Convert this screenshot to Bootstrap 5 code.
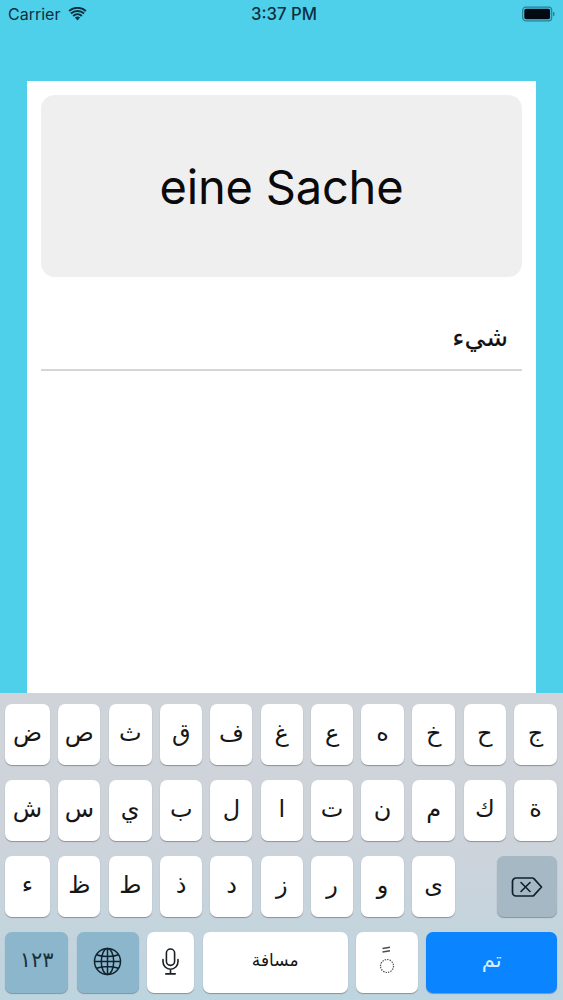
<!DOCTYPE html>
<html lang="de">
<head>
<meta charset="utf-8">
<title>Flashcard</title>
<link href="https://cdn.jsdelivr.net/npm/bootstrap@5.3.0/dist/css/bootstrap.min.css" rel="stylesheet">
<style>
html,body{margin:0;height:1000px;overflow:hidden}
body{background:#4fd0ea;font-family:Inter,"Liberation Sans",sans-serif;color:#000}
.phone-root{height:1000px;width:563px}
.status-strip{height:81px;padding:0 8px 0 8px;color:#0b2f3f;font-size:16px;position:relative}
.status-row{height:28px}
.status-clock{position:absolute;left:0;right:0;top:0;height:28px;line-height:28px;text-align:center;font-weight:500;font-size:16.7px;padding-left:5px}
.wifi-gap{gap:8px}
.sheet{flex:1 1 auto;min-height:0;margin:0 27px;background:#fff;padding:14px 14px 0}
.word-panel{height:182px;width:481px;background:#f0eff0;border-radius:14px;font-size:47px;line-height:1;color:#0a0a0a;letter-spacing:-.2px}
.answer-line{margin:0;width:481px;height:93.5px;border-bottom:2px solid #d6d6d8;padding:0 14px 12px 0;font-family:"DejaVu Sans",sans-serif;font-size:26px;color:#111;-webkit-text-stroke:.15px #111}
.kbd{height:307px;background:linear-gradient(180deg,#d0d3da 0%,#ced3da 45%,#bdd5e0 100%);padding:11px 6px 0 5px;flex:0 0 auto}
.kbd-row{height:61px;margin-bottom:15px;gap:8.3px}
.kbd-row.last-row{gap:8.4px}
.keycap{width:42px;height:61px;flex:0 0 auto;background:#fff;border-radius:7px;box-shadow:0 1px 1px #8d9198;font-family:"DejaVu Sans",sans-serif;font-size:24px;color:#161616;padding-bottom:3px}
.keycap.first-w{width:45px}
.keycap.mid-w{width:43.3px}
.keycap.alt-w{width:42.4px}
.keycap.dark-key{background:#a6b8c3;padding-bottom:0}
.keycap.blue-dark{background:#8cb6cb}
.keycap.go-key{background:#0a84ff;color:#d6ecff}
.keycap.w-del{width:60px;margin-left:auto}
.keycap.w-num{width:63.2px}
.keycap.w-globe{width:62.2px}
.keycap.w-mic{width:47px}
.keycap.w-space{width:145.3px;font-size:17px}
.keycap.w-mark{width:61.3px}
.keycap.w-done{width:131.4px;font-size:21px}
.num-label{font-size:21px;color:#17323f}
</style>
</head>
<body>
<div class="phone-root d-flex flex-column">
  <div class="status-strip">
    <div class="status-row d-flex align-items-center justify-content-between">
      <div class="d-flex align-items-center wifi-gap">
        <span>Carrier</span>
        <svg width="19" height="14" viewBox="0 0 18 14" aria-hidden="true"><path d="M9 13.5 6.4 10.6a3.8 3.8 0 0 1 5.2 0z" fill="#0b2f3f"/><path d="M4.6 8.6a6.6 6.6 0 0 1 8.8 0M2.4 6.1a9.8 9.8 0 0 1 13.2 0M.6 3.6a12.7 12.7 0 0 1 16.8 0" transform="translate(0 .4)" fill="none" stroke="#0b2f3f" stroke-width="1.9"/></svg>
      </div>
      <svg width="33" height="16" viewBox="0 0 33 16" aria-hidden="true"><rect x=".7" y="1.2" width="29" height="13.6" rx="3" fill="none" stroke="#2b7d97" stroke-width="1.2"/><rect x="2.3" y="2.8" width="25.8" height="10.4" rx="1.8" fill="#030a12"/><rect x="31" y="6" width="1.5" height="4" rx=".7" fill="#2b7d97"/></svg>
    </div>
    <div class="status-clock">3:37 PM</div>
  </div>
  <div class="sheet">
    <div class="word-panel d-flex align-items-center justify-content-center">eine Sache</div>
    <p class="answer-line d-flex align-items-end justify-content-end" dir="ltr"><span dir="rtl">شيء</span></p>
  </div>
  <div class="kbd" dir="ltr">
    <div class="kbd-row d-flex">
      <div class="keycap first-w d-flex align-items-center justify-content-center">ض</div>
      <div class="keycap d-flex align-items-center justify-content-center">ص</div>
      <div class="keycap mid-w d-flex align-items-center justify-content-center">ث</div>
      <div class="keycap d-flex align-items-center justify-content-center">ق</div>
      <div class="keycap d-flex align-items-center justify-content-center">ف</div>
      <div class="keycap d-flex align-items-center justify-content-center">غ</div>
      <div class="keycap d-flex align-items-center justify-content-center">ع</div>
      <div class="keycap alt-w d-flex align-items-center justify-content-center">ه</div>
      <div class="keycap mid-w d-flex align-items-center justify-content-center">خ</div>
      <div class="keycap alt-w d-flex align-items-center justify-content-center">ح</div>
      <div class="keycap alt-w d-flex align-items-center justify-content-center">ج</div>
    </div>
    <div class="kbd-row d-flex">
      <div class="keycap first-w d-flex align-items-center justify-content-center">ش</div>
      <div class="keycap d-flex align-items-center justify-content-center">س</div>
      <div class="keycap mid-w d-flex align-items-center justify-content-center">ي</div>
      <div class="keycap d-flex align-items-center justify-content-center">ب</div>
      <div class="keycap d-flex align-items-center justify-content-center">ل</div>
      <div class="keycap d-flex align-items-center justify-content-center">ا</div>
      <div class="keycap d-flex align-items-center justify-content-center">ت</div>
      <div class="keycap alt-w d-flex align-items-center justify-content-center">ن</div>
      <div class="keycap mid-w d-flex align-items-center justify-content-center">م</div>
      <div class="keycap alt-w d-flex align-items-center justify-content-center">ك</div>
      <div class="keycap alt-w d-flex align-items-center justify-content-center">ة</div>
    </div>
    <div class="kbd-row d-flex">
      <div class="keycap first-w d-flex align-items-center justify-content-center">ء</div>
      <div class="keycap d-flex align-items-center justify-content-center">ظ</div>
      <div class="keycap mid-w d-flex align-items-center justify-content-center">ط</div>
      <div class="keycap d-flex align-items-center justify-content-center">ذ</div>
      <div class="keycap d-flex align-items-center justify-content-center">د</div>
      <div class="keycap d-flex align-items-center justify-content-center">ز</div>
      <div class="keycap d-flex align-items-center justify-content-center">ر</div>
      <div class="keycap alt-w d-flex align-items-center justify-content-center">و</div>
      <div class="keycap mid-w d-flex align-items-center justify-content-center">ى</div>
      <div class="keycap dark-key w-del d-flex align-items-center justify-content-center">
        <svg width="32" height="24" viewBox="0 0 32 24" aria-hidden="true"><path d="M5 3h16.5a2 2 0 0 1 1.4.6L30.5 12l-7.6 8.4a2 2 0 0 1-1.4.6H5a3.5 3.5 0 0 1-3.5-3.5v-11A3.5 3.5 0 0 1 5 3z" fill="none" stroke="#10202a" stroke-width="1.7" stroke-linejoin="round"/><path d="m10 7.5 9 9m0-9-9 9" stroke="#10202a" stroke-width="1.6" stroke-linecap="round"/></svg>
      </div>
    </div>
    <div class="kbd-row last-row d-flex">
      <div class="keycap blue-dark w-num d-flex align-items-center justify-content-center"><span class="num-label">١٢٣</span></div>
      <div class="keycap blue-dark w-globe d-flex align-items-center justify-content-center">
        <svg width="29" height="29" viewBox="0 0 29 29" aria-hidden="true" fill="none" stroke="#10242f" stroke-width="1.5"><circle cx="14.5" cy="14.5" r="13"/><ellipse cx="14.5" cy="14.5" rx="6.2" ry="13"/><path d="M14.5 1.5v26M1.5 14.5h26M3.5 7.8c6 2.4 16 2.4 22 0M3.5 21.2c6-2.4 16-2.4 22 0"/></svg>
      </div>
      <div class="keycap w-mic d-flex align-items-center justify-content-center">
        <svg width="17" height="27" viewBox="0 0 17 27" aria-hidden="true" fill="none" stroke="#1b1f24" stroke-width="1.6" stroke-linecap="round"><rect x="4.4" y="1" width="8.2" height="16.4" rx="4.1"/><path d="M1 11.5v2.2a7.5 7.5 0 0 0 15 0v-2.2M8.5 21.2v4.6M3.8 25.9h9.4"/></svg>
      </div>
      <div class="keycap w-space d-flex align-items-center justify-content-center">مسافة</div>
      <div class="keycap w-mark d-flex flex-column align-items-center justify-content-center">
        <svg width="16" height="30" viewBox="0 0 16 30" aria-hidden="true" fill="none" stroke="#4a4d52"><path d="M3.5 2.5 11 1.2M3.5 6 11 4.7" stroke-width="1.4"/><circle cx="8" cy="20" r="6.5" stroke-width="1.2" stroke-dasharray="1.4 1.1"/></svg>
      </div>
      <div class="keycap go-key w-done d-flex align-items-center justify-content-center">تم</div>
    </div>
  </div>
</div>
<script src="https://cdn.jsdelivr.net/npm/bootstrap@5.3.0/dist/js/bootstrap.bundle.min.js"></script>
</body>
</html>
